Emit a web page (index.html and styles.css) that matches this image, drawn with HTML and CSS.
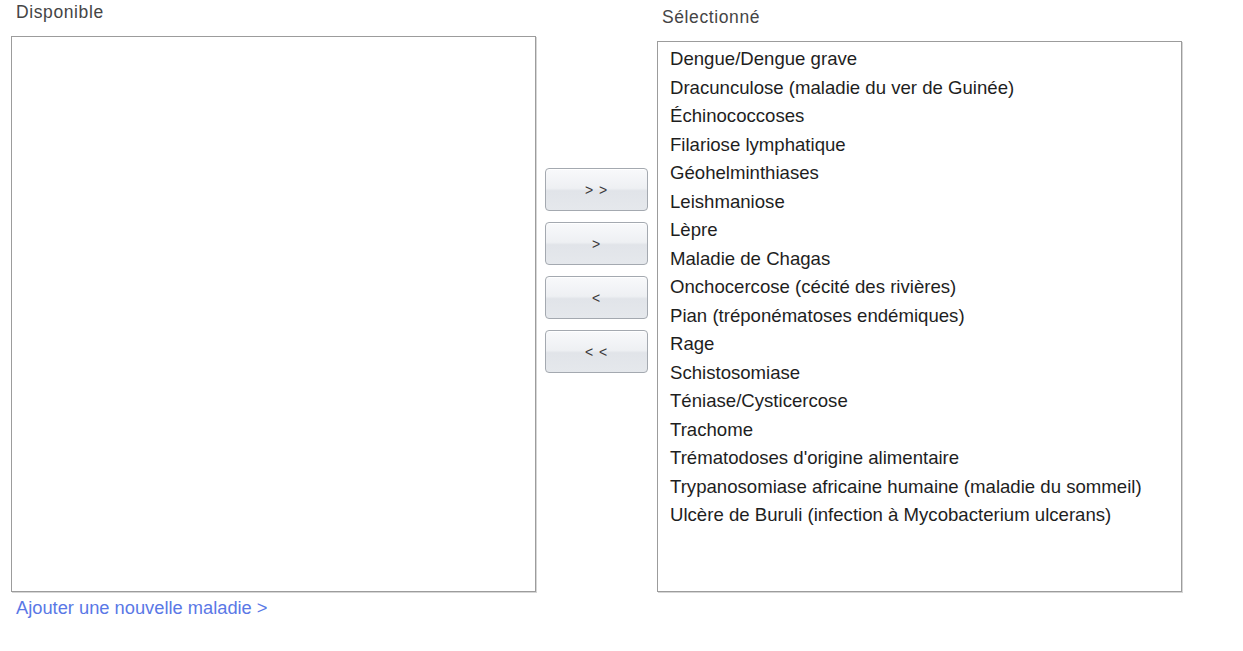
FILE: index.html
```html
<!DOCTYPE html>
<html lang="fr">
<head>
<meta charset="utf-8">
<title>Maladies</title>
<link rel="stylesheet" href="styles.css">
</head>
<body>
<div class="picker">
  <div class="col col-left">
    <div class="label">Disponible</div>
    <div class="box box-left"></div>
    <a class="add-link" href="#">Ajouter une nouvelle maladie &gt;</a>
  </div>
  <div class="buttons">
    <button class="btn">&gt; &gt;</button>
    <button class="btn">&gt;</button>
    <button class="btn">&lt;</button>
    <button class="btn">&lt; &lt;</button>
  </div>
  <div class="col col-right">
    <div class="label">Sélectionné</div>
    <ul class="box box-right">
      <li>Dengue/Dengue grave</li>
      <li>Dracunculose (maladie du ver de Guinée)</li>
      <li>Échinococcoses</li>
      <li>Filariose lymphatique</li>
      <li>Géohelminthiases</li>
      <li>Leishmaniose</li>
      <li>Lèpre</li>
      <li>Maladie de Chagas</li>
      <li>Onchocercose (cécité des rivières)</li>
      <li>Pian (tréponématoses endémiques)</li>
      <li>Rage</li>
      <li>Schistosomiase</li>
      <li>Téniase/Cysticercose</li>
      <li>Trachome</li>
      <li>Trématodoses d'origine alimentaire</li>
      <li>Trypanosomiase africaine humaine (maladie du sommeil)</li>
      <li>Ulcère de Buruli (infection à Mycobacterium ulcerans)</li>
    </ul>
  </div>
</div>
</body>
</html>
```

FILE: styles.css
```css
html, body {
  margin: 0;
  padding: 0;
  background: #ffffff;
  font-family: "Liberation Sans", Arial, sans-serif;
}

.picker {
  display: flex;
  align-items: flex-start;
  padding-left: 11px;
}

.col {
  display: flex;
  flex-direction: column;
  width: 525px;
}

.col-right {
  padding-top: 5px;
}

.label {
  font-size: 17.5px;
  line-height: 20px;
  letter-spacing: 0.6px;
  color: #454545;
  padding: 2px 0 0 5px;
  height: 36px;
  box-sizing: border-box;
}

.box {
  box-sizing: border-box;
  width: 525px;
  border: 1px solid #9c9c9c;
  box-shadow: 1px 1px 0 #d6d6d6;
  background: #ffffff;
  margin: 0;
}

.box-left {
  height: 556px;
}

.box-right {
  height: 551px;
  list-style: none;
  padding: 3px 0 0 12px;
}

.box-right li {
  font-size: 18.6px;
  line-height: 28.5px;
  color: #1e1e1e;
  white-space: nowrap;
}

.add-link {
  font-size: 18.3px;
  line-height: 20px;
  color: #5a78e6;
  text-decoration: none;
  padding: 6px 0 0 5px;
}

.buttons {
  display: flex;
  flex-direction: column;
  gap: 11px;
  padding: 168px 9px 0 9px;
}

.btn {
  width: 103px;
  height: 43px;
  border: 1px solid #a4a9b0;
  border-radius: 4px;
  background: linear-gradient(to bottom, #f8f9fb 0%, #eef0f3 47%, #e1e4e9 53%, #e5e8ec 100%);
  box-shadow: inset 0 1px 0 #ffffff;
  font-family: "Liberation Sans", Arial, sans-serif;
  font-size: 14px;
  color: #3a3a3a;
  letter-spacing: 1px;
  padding: 0;
  cursor: pointer;
}
```
